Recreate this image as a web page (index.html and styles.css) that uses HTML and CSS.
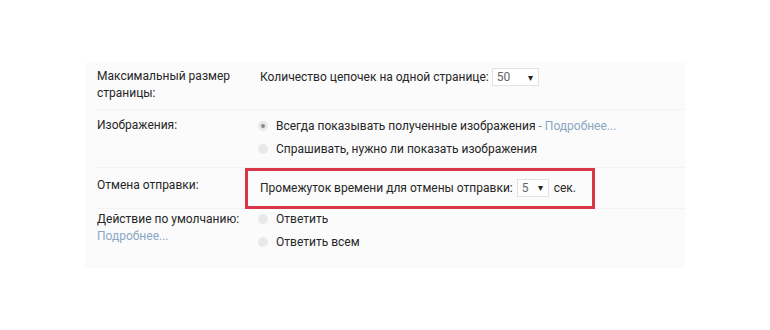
FILE: index.html
```html
<!DOCTYPE html>
<html lang="ru">
<head>
  <meta charset="UTF-8">
  <title>Настройки</title>
  <link rel="stylesheet" href="styles.css">
</head>
<body>
  <div class="panel">
    <div class="row row-size">
      <div class="label">Максимальный размер<br>страницы:</div>
      <div class="value">
        <div class="line">Количество цепочек на одной странице: <span class="select select-wide">50<span class="arrow">&#9662;</span></span></div>
      </div>
    </div>

    <div class="row row-images">
      <div class="label">Изображения:</div>
      <div class="value">
        <div class="line"><span class="radio checked"></span>Всегда показывать полученные изображения&nbsp;<span class="dash">-</span>&nbsp;<a class="link">Подробнее...</a></div>
        <div class="line"><span class="radio"></span>Спрашивать, нужно ли показать изображения</div>
      </div>
    </div>

    <div class="row row-undo">
      <div class="label">Отмена отправки:</div>
      <div class="value">
        <div class="highlight">Промежуток времени для отмены отправки:&nbsp;<span class="select">5<span class="arrow">&#9662;</span></span>&nbsp;сек.</div>
      </div>
    </div>

    <div class="row last">
      <div class="label">Действие по умолчанию:<br><a class="link">Подробнее...</a></div>
      <div class="value">
        <div class="line"><span class="radio"></span>Ответить</div>
        <div class="line"><span class="radio"></span>Ответить всем</div>
      </div>
    </div>
  </div>
</body>
</html>
```

FILE: styles.css
```css
body {
  margin: 0;
  background-color: #ffffff;
  font-family: Roboto, "Noto Sans", Arial, sans-serif;
  font-size: 12px;
  color: #262626;
}
.panel {
  width: 600px;
  height: 206px;
  margin: 62px 0 0 85px;
  background-color: #fbfbfb;
  box-sizing: border-box;
  padding-left: 12px;
}
.row {
  display: flex;
  box-sizing: border-box;
  border-bottom: 1px solid #f2f2f2;
}
.row.last { border-bottom: none; }
.label {
  width: 163px;
  line-height: 17px;
}
.value { flex: 1; }
.line {
  display: flex;
  align-items: center;
  height: 23px;
  white-space: nowrap;
}
.row-size { height: 48px; padding-top: 6px; }
.row-size .line { height: 18px; }
.row-images { height: 58px; padding-top: 4px; }
.row-images .label { padding-top: 3px; }
.row-undo { height: 41px; }
.row-undo .label { padding-top: 9px; }
.row.last { padding-top: 2px; }
.row.last .value { margin-top: -4px; }
.link { color: #8ba6c4; }
.dash { color: #888; }
.radio {
  display: inline-block;
  width: 10px;
  height: 10px;
  border-radius: 50%;
  background-color: #e9e9e9;
  margin: 0 8px 0 -2px;
  position: relative;
}
.radio.checked::after {
  content: "";
  position: absolute;
  left: 3px;
  top: 3px;
  width: 4px;
  height: 4px;
  border-radius: 50%;
  background-color: #8a8a8a;
}
.select {
  display: inline-flex;
  align-items: center;
  justify-content: space-between;
  width: 32px;
  height: 18px;
  margin-left: 3px;
  padding: 0 5px 0 4px;
  background-color: #ffffff;
  border: 1px solid #e2e2e2;
  color: #666;
  box-sizing: border-box;
}
.select-wide { width: 47px; }
.arrow { font-size: 10px; color: #222; }
.highlight {
  display: flex;
  align-items: center;
  height: 41px;
  width: 350px;
  margin-left: -15px;
  padding: 0 0 2px 12px;
  border: 3px solid #d9364a;
  box-sizing: border-box;
  white-space: nowrap;
}
.highlight .select { margin: 0 2px 0 1px; }
```
